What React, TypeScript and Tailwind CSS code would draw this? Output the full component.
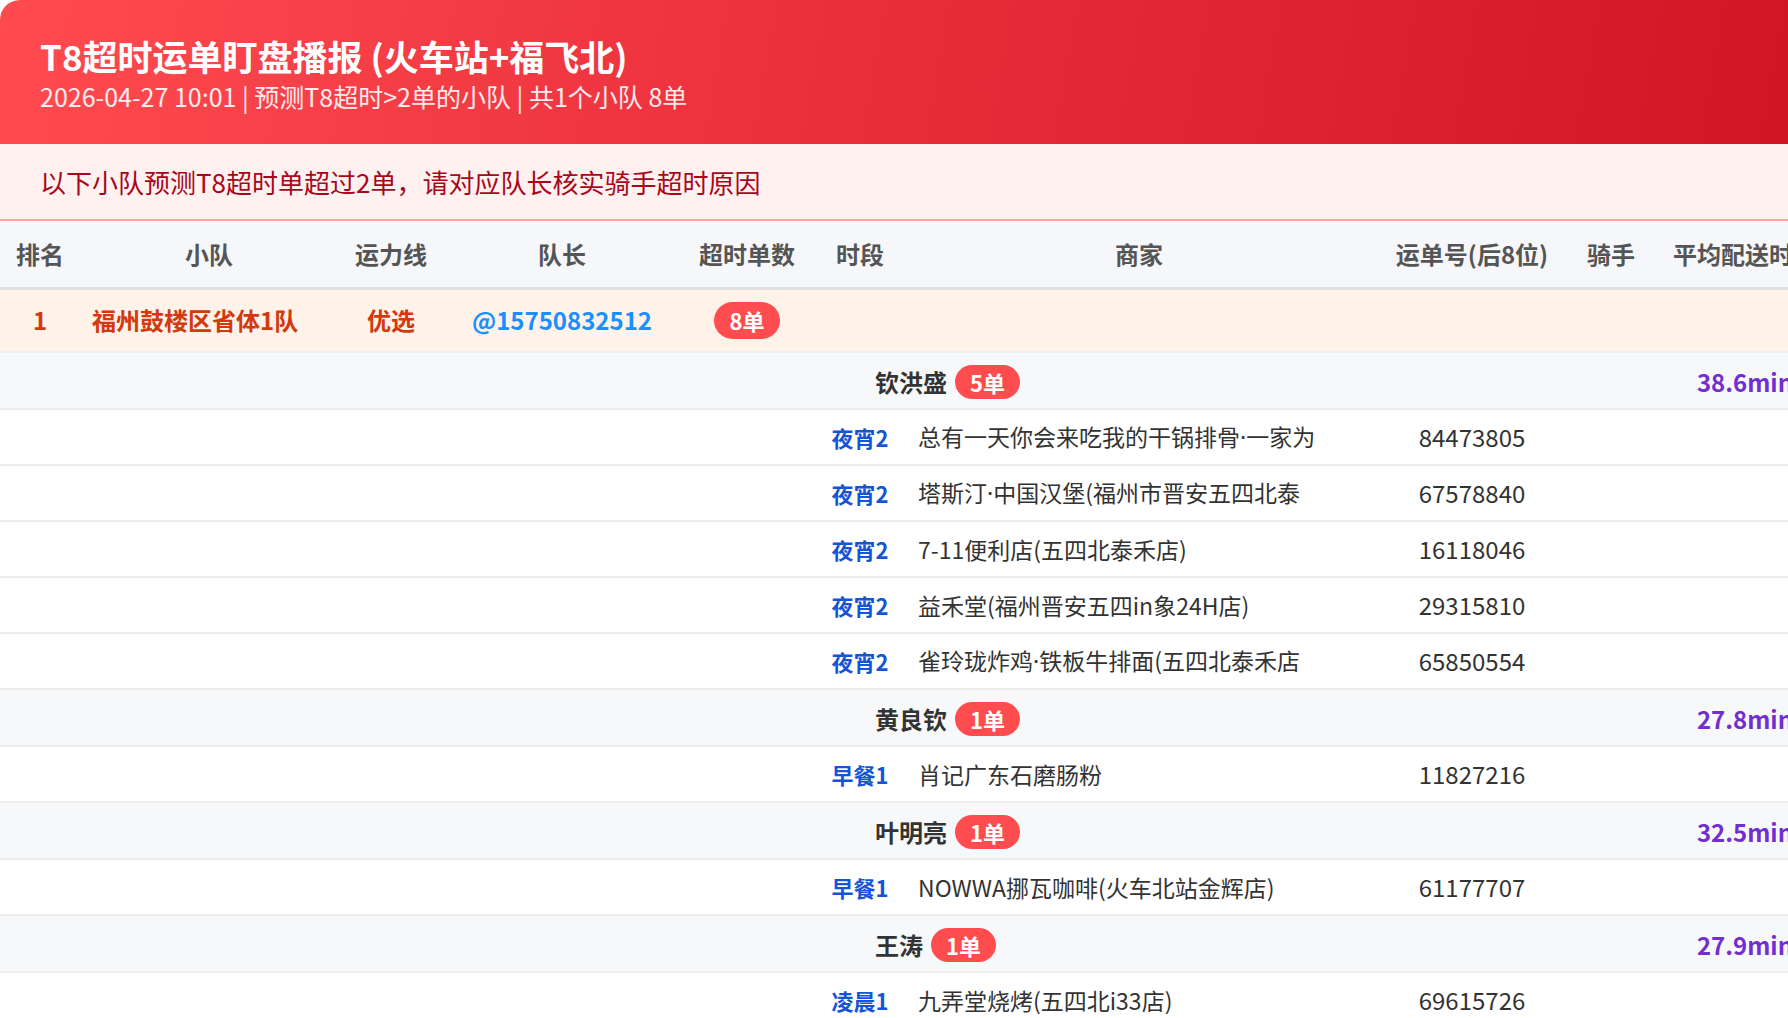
import * as React from "react";

interface Order {
  slot: string;
  shop: string;
  no: string;
}

interface Rider {
  name: string;
  count: number;
  avg: string;
  orders: Order[];
}

const COLS = [
  { label: "排名", w: "w-[80px]" },
  { label: "小队", w: "w-[258px]" },
  { label: "运力线", w: "w-[106px]" },
  { label: "队长", w: "w-[236px]" },
  { label: "超时单数", w: "w-[134px]" },
  { label: "时段", w: "w-[92px]" },
  { label: "商家", w: "w-[466px]" },
  { label: "运单号(后8位)", w: "w-[200px]" },
  { label: "骑手", w: "w-[78px]" },
  { label: "平均配送时长", w: "w-[190px]" },
];

const RIDERS: Rider[] = [
  {
    name: "钦洪盛",
    count: 5,
    avg: "38.6min",
    orders: [
      { slot: "夜宵2", shop: "总有一天你会来吃我的干锅排骨·一家为", no: "84473805" },
      { slot: "夜宵2", shop: "塔斯汀·中国汉堡(福州市晋安五四北泰", no: "67578840" },
      { slot: "夜宵2", shop: "7-11便利店(五四北泰禾店)", no: "16118046" },
      { slot: "夜宵2", shop: "益禾堂(福州晋安五四in象24H店)", no: "29315810" },
      { slot: "夜宵2", shop: "雀玲珑炸鸡·铁板牛排面(五四北泰禾店", no: "65850554" },
    ],
  },
  {
    name: "黄良钦",
    count: 1,
    avg: "27.8min",
    orders: [{ slot: "早餐1", shop: "肖记广东石磨肠粉", no: "11827216" }],
  },
  {
    name: "叶明亮",
    count: 1,
    avg: "32.5min",
    orders: [{ slot: "早餐1", shop: "NOWWA挪瓦咖啡(火车北站金辉店)", no: "61177707" }],
  },
  {
    name: "王涛",
    count: 1,
    avg: "27.9min",
    orders: [{ slot: "凌晨1", shop: "九弄堂烧烤(五四北i33店)", no: "69615726" }],
  },
];

function Badge({ children, big }: { children: React.ReactNode; big?: boolean }) {
  return (
    <span
      className={
        big
          ? "inline-flex h-[37px] items-center rounded-full bg-[#ff4d4f] px-4 text-[22px] font-bold leading-none text-white"
          : "inline-flex h-[34px] items-center rounded-full bg-[#ff4d4f] px-[15px] text-[22px] font-bold leading-none text-white"
      }
    >
      {children}
    </span>
  );
}

// the CJK font draws "·" full width; the reference has a narrow dot
function ShopName({ text }: { text: string }) {
  const parts = text.split("·");
  return (
    <>
      {parts.map((p, i) => (
        <React.Fragment key={i}>
          {i > 0 && <span className="font-['Noto_Sans',sans-serif]">·</span>}
          {p}
        </React.Fragment>
      ))}
    </>
  );
}

export default function App() {
  return (
    <div className="h-screen w-screen overflow-hidden bg-white font-['Noto_Sans_CJK_SC','Noto_Sans',sans-serif]">
      <div className="w-[1840px] overflow-hidden rounded-tl-[20px]">
        {/* title bar */}
        <div className="h-[144px] bg-[linear-gradient(100deg,#ff4b50_0%,#ea2f3b_45%,#cf1524_100%)] px-[40px] pt-[36px] text-white">
          <div className="text-[35px] font-bold leading-[40px]">T8超时运单盯盘播报 (火车站+福飞北)</div>
          <div className="mt-[4px] text-[25px] leading-[32px] text-white/90">
            2026-04-27 10:01 | 预测T8超时&gt;2单的小队 | 共1个小队 8单
          </div>
        </div>

        {/* notice */}
        <div className="flex h-[77px] items-center border-b-2 border-[#ffa39e] bg-[#fff1f0] px-[40px] text-[26px] text-[#a8071a]">
          以下小队预测T8超时单超过2单，请对应队长核实骑手超时原因
        </div>

        <table className="w-[1840px] table-fixed border-collapse text-[24px]">
          <colgroup>
            {COLS.map((c) => (
              <col key={c.label} className={c.w} />
            ))}
          </colgroup>
          <thead>
            <tr className="h-[67px] bg-[#f5f7fa]">
              {COLS.map((c) => (
                <th
                  key={c.label}
                  className="whitespace-nowrap border-b-[3px] border-[#e0e0e0] text-center font-bold text-[#555]"
                >
                  {c.label}
                </th>
              ))}
            </tr>
          </thead>
          <tbody>
            <tr className="h-[64px] bg-[#fff2e8] font-bold">
              <td className="border-b-2 border-[#f0f0f0] text-center text-[#d4380d]">1</td>
              <td className="border-b-2 border-[#f0f0f0] pl-3 text-[#d4380d]">福州鼓楼区省体1队</td>
              <td className="border-b-2 border-[#f0f0f0] text-center text-[#d4380d]">优选</td>
              <td className="border-b-2 border-[#f0f0f0] text-center text-[#1890ff]">@15750832512</td>
              <td className="border-b-2 border-[#f0f0f0] text-center">
                <Badge big>8单</Badge>
              </td>
              <td colSpan={5} className="border-b-2 border-[#f0f0f0]" />
            </tr>
            {RIDERS.map((r) => (
              <React.Fragment key={r.name}>
                <tr className="h-[57px] bg-[#f7f8fa]">
                  <td colSpan={5} className="border-b-2 border-[#ededed]" />
                  <td colSpan={4} className="border-b-2 border-[#ededed] pl-[61px] pt-[2px]">
                    <div className="flex items-center gap-2">
                      <span className="font-bold text-[#333]">{r.name}</span>
                      <Badge>{r.count}单</Badge>
                    </div>
                  </td>
                  <td className="border-b-2 border-[#ededed] pt-[2px] text-center font-bold text-[#722ed1]">
                    {r.avg}
                  </td>
                </tr>
                {r.orders.map((o) => (
                  <tr key={o.no} className="h-[56px] bg-white">
                    <td colSpan={5} className="border-b-2 border-[#ededed]" />
                    <td className="whitespace-nowrap border-b-2 border-[#ededed] text-center text-[22px] font-bold text-[#1554d6]">
                      {o.slot}
                    </td>
                    <td className="whitespace-nowrap border-b-2 border-[#ededed] pl-3 text-[23px] text-[#333]">
                      <ShopName text={o.shop} />
                    </td>
                    <td className="border-b-2 border-[#ededed] text-center text-[#333]">{o.no}</td>
                    <td className="border-b-2 border-[#ededed]" />
                    <td className="border-b-2 border-[#ededed]" />
                  </tr>
                ))}
              </React.Fragment>
            ))}
          </tbody>
        </table>
      </div>
    </div>
  );
}
